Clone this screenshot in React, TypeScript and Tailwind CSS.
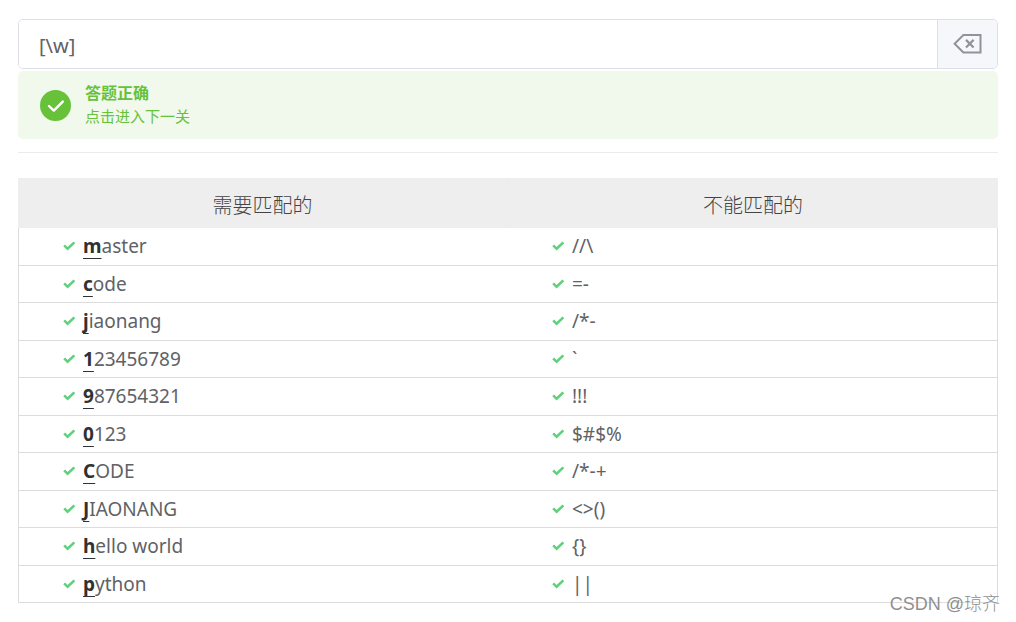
const ROWS = [
  { match: "master", skip: "//\\" },
  { match: "code", skip: "=-" },
  { match: "jiaonang", skip: "/*-" },
  { match: "123456789", skip: "`" },
  { match: "987654321", skip: "!!!" },
  { match: "0123", skip: "$#$%" },
  { match: "CODE", skip: "/*-+" },
  { match: "JIAONANG", skip: "<>()" },
  { match: "hello world", skip: "{}" },
  { match: "python", skip: "||" },
];

function Check() {
  return (
    <svg className="h-3 w-3 shrink-0" viewBox="0 0 12 12" fill="none" aria-hidden="true">
      <path d="M1.2 5.4 4.6 8.8 11.4 2.4" stroke="#5fd07c" strokeWidth="2.6" />
    </svg>
  );
}

function BackspaceIcon() {
  return (
    <svg width="30" height="22" viewBox="0 0 30 22" fill="none" stroke="#909399" aria-hidden="true">
      <path d="M10.4 2H27.5v17.5H10.4L1.6 10.7z" strokeWidth="2" />
      <path d="m13 6.9 7.6 7.6m0-7.6L13 14.5" strokeWidth="2.2" />
    </svg>
  );
}

function RegexInput() {
  return (
    <div className="flex h-[50px] overflow-hidden rounded-[5px] border border-[#dcdfe6]">
      <input
        type="text"
        aria-label="正则表达式"
        defaultValue="[\w]"
        className="min-w-0 flex-1 bg-white px-5 pt-1 text-xl text-[#606266] outline-none"
      />
      <button
        type="button"
        aria-label="清空"
        className="flex w-[60px] items-center justify-center border-l border-[#dcdfe6] bg-[#f5f7fa]"
      >
        <BackspaceIcon />
      </button>
    </div>
  );
}

function SuccessAlert() {
  return (
    <div
      role="alert"
      className="mt-0.5 flex h-[68px] items-center gap-3.5 rounded-[5px] bg-[#f0f9eb] px-[22px] text-[#67c23a]"
    >
      <svg className="h-[31px] w-[31px]" viewBox="0 0 31 31" fill="none" aria-hidden="true">
        <circle cx="15.5" cy="15.5" r="15.5" fill="#67c23a" />
        <path
          d="m9 16 4.8 4.6 9-9"
          stroke="#fff"
          strokeWidth="2.4"
          strokeLinecap="round"
          strokeLinejoin="round"
        />
      </svg>
      <div className="pb-0.5">
        <p className="text-base leading-6 font-bold">答题正确</p>
        <p className="text-[15px] leading-[22px]">点击进入下一关</p>
      </div>
    </div>
  );
}

export default function App() {
  return (
    <main className="relative bg-white px-[18px] pt-[19px] pb-[19px] font-['Noto_Sans','Noto_Sans_CJK_SC',sans-serif] text-[#606266]">
      <RegexInput />
      <SuccessAlert />
      <hr className="mt-[13px] border-[#ebebeb]" />
      <table className="mt-[25px] w-full table-fixed border-separate border-spacing-0">
        <thead>
          <tr className="h-[50px] bg-[#eee] text-xl text-[#444]">
            <th className="border-r border-[#ececec] p-0 pt-1.5 font-light">需要匹配的</th>
            <th className="p-0 pt-1.5 font-light">不能匹配的</th>
          </tr>
        </thead>
        <tbody className="text-[19px] leading-6">
          {ROWS.map((row) => (
            <tr key={row.match} className="odd:h-[38px] even:h-[37px]">
              <td className="border-b border-l border-[#dcdcdc] p-0 pb-px pl-11">
                <div className="flex items-center gap-2">
                  <Check />
                  <span>
                    <b className="font-bold text-[#303133] underline decoration-1 underline-offset-[5px] [text-decoration-skip-ink:none]">
                      {row.match[0]}
                    </b>
                    {row.match.slice(1)}
                  </span>
                </div>
              </td>
              <td className="border-r border-b border-[#dcdcdc] p-0 pb-px pl-11">
                <div className="flex items-center gap-2">
                  <Check />
                  <span>{row.skip}</span>
                </div>
              </td>
            </tr>
          ))}
        </tbody>
      </table>
      <span className="absolute right-4 bottom-1.5 font-['Liberation_Sans','Noto_Sans_CJK_SC',sans-serif] text-lg leading-6 font-light text-[#909090]">
        CSDN @琼齐
      </span>
    </main>
  );
}
